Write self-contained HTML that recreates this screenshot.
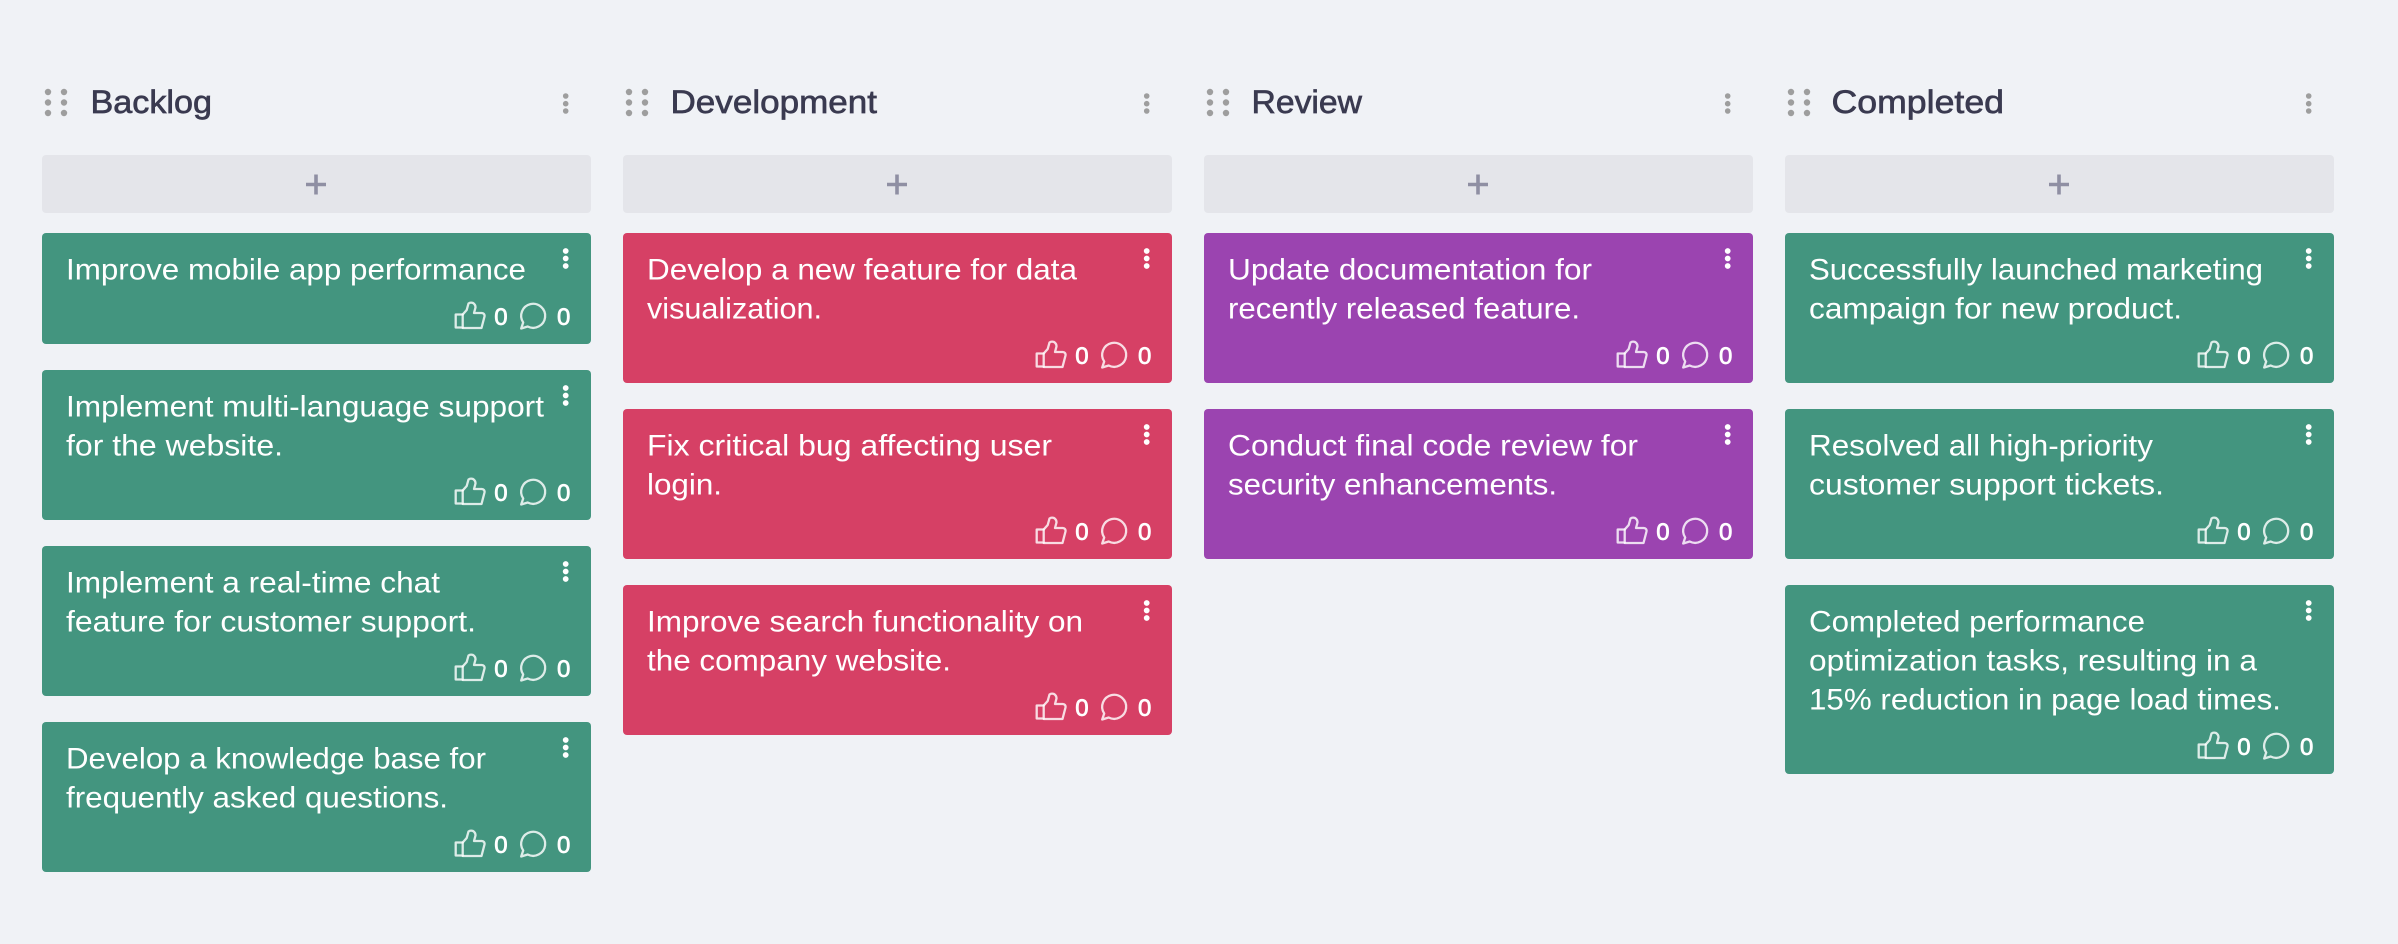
<!DOCTYPE html>
<html lang="en">
<head>
<meta charset="utf-8">
<title>Kanban board</title>
<style>
html,body{margin:0;padding:0;background:#f0f2f6;width:2398px;height:944px;overflow:hidden}
svg{display:block}
text{font-family:"Liberation Sans",Arial,sans-serif}
.t{font-size:29.5px;fill:#fff;transform:translateY(.7px)}
.h{font-size:32px;font-weight:400;fill:#3a3a50;stroke:#3a3a50;stroke-width:.65px}
.n{font-size:24px;font-weight:400;fill:#fff;stroke:#fff;stroke-width:.7px}
.g{fill:#43957f}.r{fill:#d64065}.p{fill:#9b44b0}
</style>
</head>
<body>
<svg width="2398" height="944" viewBox="0 0 2398 944" xmlns="http://www.w3.org/2000/svg">
<defs>
<g id="hd">
  <g fill="#9e9e9e"><circle cx="48" cy="92" r="3.2"/><circle cx="64" cy="92" r="3.2"/><circle cx="48" cy="102.500" r="3.2"/><circle cx="64" cy="102.500" r="3.2"/><circle cx="48" cy="113" r="3.2"/><circle cx="64" cy="113" r="3.2"/><circle cx="565.7" cy="96" r="2.8"/><circle cx="565.7" cy="103.7" r="2.8"/><circle cx="565.7" cy="111" r="2.8"/></g>
  <rect x="42" y="155" width="549" height="58" rx="4" fill="#e4e5ea"/>
  <path d="M306 184.500h20M316 174.500v20" stroke="#8f8fa3" stroke-width="3.6" fill="none"/>
</g>
<g id="dt" fill="#fff"><circle cx="565.7" cy="251" r="2.9"/><circle cx="565.7" cy="258.500" r="2.9"/><circle cx="565.7" cy="266" r="2.9"/></g>
<g id="st">
  <g fill="none" stroke="#fff" stroke-opacity=".82" stroke-width="2.3" stroke-linejoin="round" stroke-linecap="round">
    <path d="M455.700 314.500h7v13h-7z"/>
    <path d="M462.700 314.500l4-4.500 1.800-6.500q2-1.500 4.500-.5 2.500 1.500 2.500 4.500l-1.500 5.500h7.800q3.200.5 2.700 3.500l-3 11.500h-18.800"/>
    <path transform="translate(.7 1)" d="M520.500 327.500l2-6a12 12 0 1 1 4.500 4z"/>
  </g>
  <text class="n" x="494.300" y="324.800">0</text>
  <text class="n" x="557" y="324.800">0</text>
</g>
</defs>

<use href="#hd"/><use href="#hd" x="581"/><use href="#hd" x="1162"/><use href="#hd" x="1743"/>
<text class="h" x="90.500" y="113" textLength="121.500" lengthAdjust="spacingAndGlyphs">Backlog</text>
<text class="h" x="670.500" y="113" textLength="206.500" lengthAdjust="spacingAndGlyphs">Development</text>
<text class="h" x="1251.500" y="113" textLength="110.500" lengthAdjust="spacingAndGlyphs">Review</text>
<text class="h" x="1831.500" y="113" textLength="172.500" lengthAdjust="spacingAndGlyphs">Completed</text>

<!-- Backlog -->
<rect class="g" x="42" y="233" width="549" height="111" rx="4"/>
<text class="t" x="66" y="279" textLength="460" lengthAdjust="spacingAndGlyphs">Improve mobile app performance</text>
<use href="#dt"/><use href="#st"/>
<rect class="g" x="42" y="370" width="549" height="150" rx="4"/>
<text class="t" x="66" y="416" textLength="478" lengthAdjust="spacingAndGlyphs">Implement multi-language support</text>
<text class="t" x="66" y="455" textLength="217" lengthAdjust="spacingAndGlyphs">for the website.</text>
<use href="#dt" y="137"/><use href="#st" y="176"/>
<rect class="g" x="42" y="546" width="549" height="150" rx="4"/>
<text class="t" x="66" y="592" textLength="374" lengthAdjust="spacingAndGlyphs">Implement a real-time chat</text>
<text class="t" x="66" y="631" textLength="410" lengthAdjust="spacingAndGlyphs">feature for customer support.</text>
<use href="#dt" y="313"/><use href="#st" y="352"/>
<rect class="g" x="42" y="722" width="549" height="150" rx="4"/>
<text class="t" x="66" y="768" textLength="420" lengthAdjust="spacingAndGlyphs">Develop a knowledge base for</text>
<text class="t" x="66" y="807" textLength="382" lengthAdjust="spacingAndGlyphs">frequently asked questions.</text>
<use href="#dt" y="489"/><use href="#st" y="528"/>

<!-- Development -->
<rect class="r" x="623" y="233" width="549" height="150" rx="4"/>
<text class="t" x="647" y="279" textLength="430" lengthAdjust="spacingAndGlyphs">Develop a new feature for data</text>
<text class="t" x="647" y="318" textLength="175" lengthAdjust="spacingAndGlyphs">visualization.</text>
<use href="#dt" x="581"/><use href="#st" x="581" y="39"/>
<rect class="r" x="623" y="409" width="549" height="150" rx="4"/>
<text class="t" x="647" y="455" textLength="405" lengthAdjust="spacingAndGlyphs">Fix critical bug affecting user</text>
<text class="t" x="647" y="494" textLength="75" lengthAdjust="spacingAndGlyphs">login.</text>
<use href="#dt" x="581" y="176"/><use href="#st" x="581" y="215"/>
<rect class="r" x="623" y="585" width="549" height="150" rx="4"/>
<text class="t" x="647" y="631" textLength="436" lengthAdjust="spacingAndGlyphs">Improve search functionality on</text>
<text class="t" x="647" y="670" textLength="304" lengthAdjust="spacingAndGlyphs">the company website.</text>
<use href="#dt" x="581" y="352"/><use href="#st" x="581" y="391"/>

<!-- Review -->
<rect class="p" x="1204" y="233" width="549" height="150" rx="4"/>
<text class="t" x="1228" y="279" textLength="364" lengthAdjust="spacingAndGlyphs">Update documentation for</text>
<text class="t" x="1228" y="318" textLength="352" lengthAdjust="spacingAndGlyphs">recently released feature.</text>
<use href="#dt" x="1162"/><use href="#st" x="1162" y="39"/>
<rect class="p" x="1204" y="409" width="549" height="150" rx="4"/>
<text class="t" x="1228" y="455" textLength="410" lengthAdjust="spacingAndGlyphs">Conduct final code review for</text>
<text class="t" x="1228" y="494" textLength="329" lengthAdjust="spacingAndGlyphs">security enhancements.</text>
<use href="#dt" x="1162" y="176"/><use href="#st" x="1162" y="215"/>

<!-- Completed -->
<rect class="g" x="1785" y="233" width="549" height="150" rx="4"/>
<text class="t" x="1809" y="279" textLength="454" lengthAdjust="spacingAndGlyphs">Successfully launched marketing</text>
<text class="t" x="1809" y="318" textLength="373" lengthAdjust="spacingAndGlyphs">campaign for new product.</text>
<use href="#dt" x="1743"/><use href="#st" x="1743" y="39"/>
<rect class="g" x="1785" y="409" width="549" height="150" rx="4"/>
<text class="t" x="1809" y="455" textLength="344" lengthAdjust="spacingAndGlyphs">Resolved all high-priority</text>
<text class="t" x="1809" y="494" textLength="355" lengthAdjust="spacingAndGlyphs">customer support tickets.</text>
<use href="#dt" x="1743" y="176"/><use href="#st" x="1743" y="215"/>
<rect class="g" x="1785" y="585" width="549" height="189" rx="4"/>
<text class="t" x="1809" y="631" textLength="336" lengthAdjust="spacingAndGlyphs">Completed performance</text>
<text class="t" x="1809" y="670" textLength="448" lengthAdjust="spacingAndGlyphs">optimization tasks, resulting in a</text>
<text class="t" x="1809" y="709" textLength="472" lengthAdjust="spacingAndGlyphs">15% reduction in page load times.</text>
<use href="#dt" x="1743" y="352"/><use href="#st" x="1743" y="430"/>
</svg>
</body>
</html>
